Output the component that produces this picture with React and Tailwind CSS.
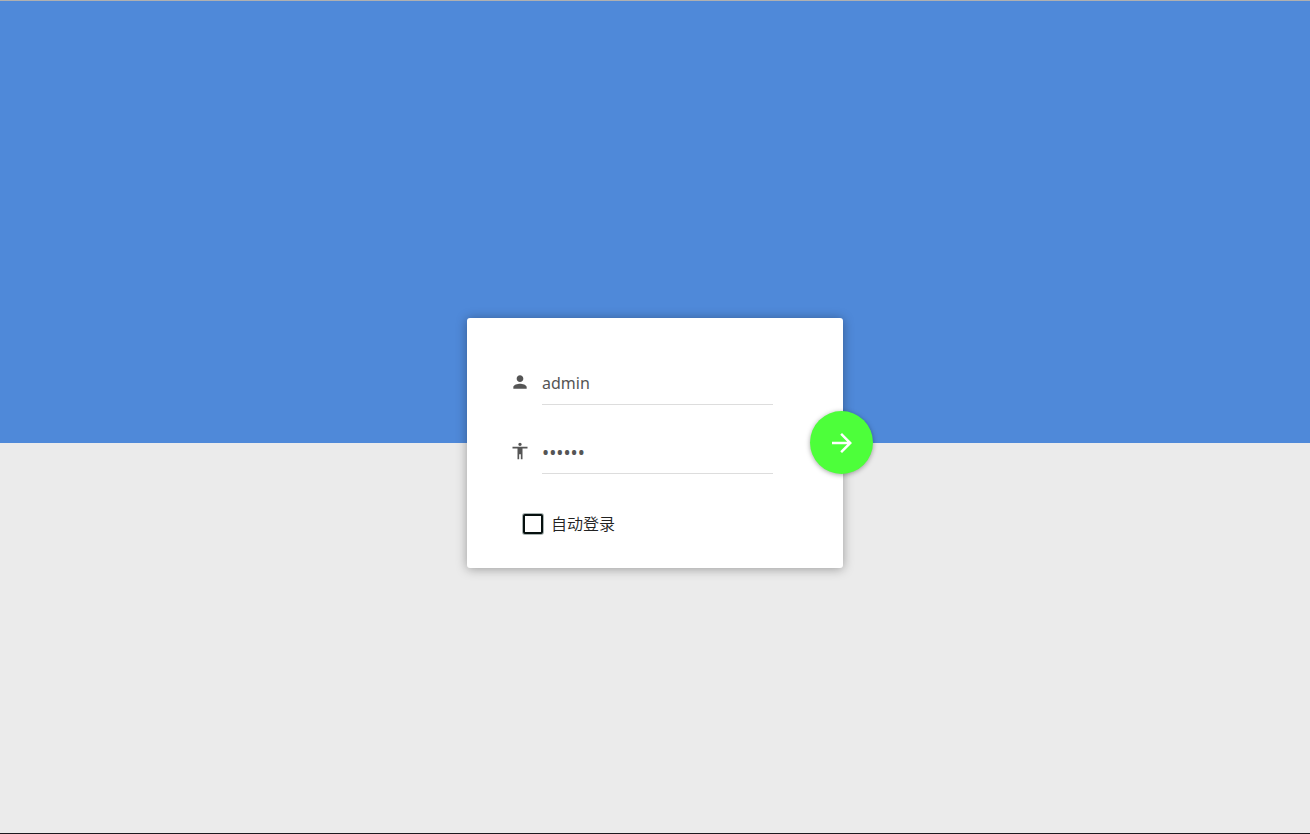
import { MdAccessibility, MdArrowForward, MdPerson } from "react-icons/md";

function Field({ id, label, icon: Icon, inputClass = "pb-[9px] text-base", ...inputProps }) {
  return (
    <div className="flex items-start gap-3">
      <label htmlFor={id} aria-label={label} className="flex h-[22px] items-center text-[#555]">
        <Icon size={20} aria-hidden="true" />
      </label>
      <input
        id={id}
        className={`h-[34px] min-w-0 flex-1 border-b border-[#ddd] bg-transparent text-[#555] outline-none ${inputClass}`}
        {...inputProps}
      />
    </div>
  );
}

export default function App() {
  return (
    <main className="flex min-h-screen flex-col border-t border-b border-t-[#b0b0b0] border-b-[#1c1a1f] bg-[#ebebeb] font-['Noto_Sans','Noto_Sans_CJK_SC',sans-serif] text-base">
      <div className="h-[53vh] shrink-0 bg-[#4f89d9]" />
      <form
        onSubmit={(event) => event.preventDefault()}
        className="relative mx-auto -mt-[125px] w-[376px] rounded-[3px] bg-white pt-[53px] pr-[70px] pb-8 pl-[43px] shadow-[0_1px_11px_rgba(0,0,0,0.35)]"
      >
        <div className="flex flex-col gap-[35px]">
          <Field id="username" label="用户名" icon={MdPerson} type="text" defaultValue="admin" />
          <Field
            id="password"
            label="密码"
            icon={MdAccessibility}
            type="password"
            defaultValue="123456"
            inputClass="pb-[7px] text-[19px]"
          />
        </div>
        <label className="mt-[38px] ml-[13px] flex w-fit items-center gap-2 leading-6 font-[350] text-[#222]">
          <input
            type="checkbox"
            className="size-5 appearance-none rounded-[2px] border-2 border-[#06100f] bg-white shadow-[0_0_0_1px_#a9b3b2] checked:bg-[#4dff3a]"
          />
          自动登录
        </label>
        <button
          type="submit"
          aria-label="登录"
          className="absolute top-[93px] -right-[30px] flex size-[63px] items-center justify-center rounded-full bg-[#4dff3a] text-white shadow-[0_1px_5px_rgba(0,0,0,0.35)]"
        >
          <MdArrowForward size={30} aria-hidden="true" />
        </button>
      </form>
    </main>
  );
}
